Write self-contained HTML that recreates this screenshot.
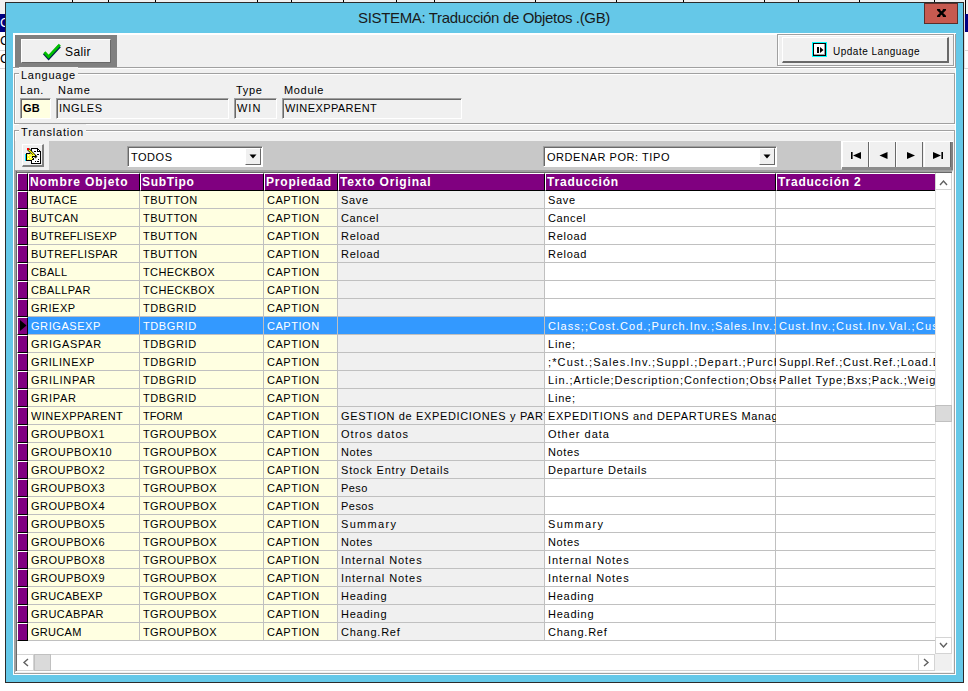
<!DOCTYPE html>
<html><head><meta charset="utf-8"><style>
html,body{margin:0;padding:0}
body{width:968px;height:691px;position:relative;overflow:hidden;background:#fff;font-family:"Liberation Sans",sans-serif}
.t{position:absolute;white-space:pre;line-height:13px;font-family:"Liberation Sans",sans-serif}
</style></head><body>
<div style="position:absolute;left:0px;top:0px;width:968px;height:14px;background:#f0f0f0"></div>
<div style="position:absolute;left:72px;top:0px;width:1px;height:3px;background:#000"></div>
<div style="position:absolute;left:108px;top:0px;width:1px;height:3px;background:#000"></div>
<div style="position:absolute;left:155px;top:0px;width:1px;height:3px;background:#000"></div>
<div style="position:absolute;left:257px;top:0px;width:1px;height:3px;background:#000"></div>
<div style="position:absolute;left:291px;top:0px;width:1px;height:3px;background:#000"></div>
<div style="position:absolute;left:343px;top:0px;width:1px;height:3px;background:#000"></div>
<div style="position:absolute;left:396px;top:0px;width:1px;height:3px;background:#000"></div>
<div style="position:absolute;left:434px;top:0px;width:1px;height:3px;background:#000"></div>
<div style="position:absolute;left:535px;top:0px;width:1px;height:3px;background:#000"></div>
<div style="position:absolute;left:616px;top:0px;width:1px;height:3px;background:#000"></div>
<div style="position:absolute;left:683px;top:0px;width:1px;height:3px;background:#000"></div>
<div style="position:absolute;left:764px;top:0px;width:1px;height:3px;background:#000"></div>
<div style="position:absolute;left:798px;top:0px;width:1px;height:3px;background:#000"></div>
<div style="position:absolute;left:859px;top:0px;width:1px;height:3px;background:#000"></div>
<div style="position:absolute;left:934px;top:0px;width:1px;height:3px;background:#000"></div>
<div style="position:absolute;left:0px;top:14px;width:5px;height:18px;background:#000080"></div>
<div style="position:absolute;left:964px;top:14px;width:4px;height:18px;background:#000080"></div>
<div style="position:absolute;left:0px;top:50px;width:5px;height:1px;background:#d8d8d8"></div>
<div style="position:absolute;left:0px;top:68px;width:5px;height:1px;background:#d8d8d8"></div>
<div style="position:absolute;left:964px;top:50px;width:4px;height:1px;background:#d8d8d8"></div>
<div style="position:absolute;left:964px;top:68px;width:4px;height:1px;background:#d8d8d8"></div>
<div style="position:absolute;left:965px;top:0px;width:1px;height:14px;background:#000"></div>
<div style="position:absolute;left:964px;top:14px;width:1px;height:54px;background:#e0e0e0"></div>
<div class="t" style="left:0px;top:16px;font-size:13px;color:#fff">C</div>
<div class="t" style="left:0px;top:34px;font-size:13px;color:#000">C</div>
<div class="t" style="left:0px;top:52px;font-size:13px;color:#000">C</div>
<div style="position:absolute;left:5px;top:2px;width:957px;height:679px;border:1px solid #2b2b2b;background:#65c8e8"></div>
<div class="t" style="left:358px;top:11px;font-size:15px;letter-spacing:-0.341px;color:#1a1a1a;">SISTEMA: Traducción de Objetos .(GB)</div>
<div style="position:absolute;left:924px;top:3px;width:32px;height:19px;background:#c75a50;border:1px solid #5a2e2a"></div>
<svg style="position:absolute;left:937px;top:9px" width="9" height="8" viewBox="0 0 9 8"><path d="M1.3 0.9 L7.7 7.1 M7.7 0.9 L1.3 7.1" stroke="#000" stroke-width="2.3"/><rect x="0" y="0" width="3.2" height="1.6" fill="#000"/><rect x="5.8" y="0" width="3.2" height="1.6" fill="#000"/><rect x="0" y="6.4" width="3.2" height="1.6" fill="#000"/><rect x="5.8" y="6.4" width="3.2" height="1.6" fill="#000"/></svg>
<div style="position:absolute;left:13px;top:33px;width:943px;height:642px;background:#f0f0f0"></div>
<div style="position:absolute;left:13px;top:33px;width:943px;height:1px;background:#fff"></div>
<div style="position:absolute;left:13px;top:33px;width:1px;height:642px;background:#fff"></div>
<div style="position:absolute;left:955px;top:33px;width:1px;height:642px;background:#fff"></div>
<div style="position:absolute;left:13px;top:674px;width:943px;height:1px;background:#fff"></div>
<div style="position:absolute;left:14px;top:34px;width:941px;height:1px;background:#fff"></div>
<div style="position:absolute;left:14px;top:34px;width:1px;height:33px;background:#fff"></div>
<div style="position:absolute;left:955px;top:34px;width:1px;height:34px;background:#a0a0a0"></div>
<div style="position:absolute;left:15px;top:35px;width:102px;height:32px;background:#808080"></div>
<div style="position:absolute;left:21px;top:39px;width:90px;height:24px;background:#f0f0f0;border-top:1px solid #fff;border-left:1px solid #fff;border-right:1px solid #696969;border-bottom:1px solid #696969;box-sizing:border-box"></div>
<svg style="position:absolute;left:42px;top:42px" width="20" height="19" viewBox="0 0 20 19"><path d="M2.2 11.2 L6.6 16 L17.6 4" fill="none" stroke="#002050" stroke-width="3.4"/><path d="M2.4 10.2 L6.6 14.8 L17.8 2.6" fill="none" stroke="#00c000" stroke-width="2.8"/></svg>
<div class="t" style="left:65px;top:46px;font-size:12px;letter-spacing:0.398px;color:#000;">Salir</div>
<div style="position:absolute;left:13px;top:67px;width:943px;height:1px;background:#a0a0a0"></div>
<div style="position:absolute;left:13px;top:68px;width:943px;height:1px;background:#fff"></div>
<div style="position:absolute;left:778px;top:35px;width:177px;height:32px;border:1px solid #fff;box-sizing:border-box"></div>
<div style="position:absolute;left:777px;top:34px;width:177px;height:32px;border:1px solid #a0a0a0;box-sizing:border-box"></div>
<div style="position:absolute;left:782px;top:37px;width:167px;height:26px;background:#f0f0f0;border-top:1px solid #fff;border-left:1px solid #fff;border-right:2px solid #696969;border-bottom:2px solid #696969;box-sizing:border-box"></div>
<div style="position:absolute;left:812px;top:42px;width:15px;height:15px;background:#00ffff"></div>
<div style="position:absolute;left:813px;top:43px;width:13px;height:13px;background:#000"></div>
<div style="position:absolute;left:814px;top:44px;width:11px;height:11px;background:#fff;box-shadow:inset -1px -1px 0 #a0a0a0"></div>
<div style="position:absolute;left:817px;top:47px;width:2px;height:6px;background:#000"></div>
<svg style="position:absolute;left:820px;top:47px" width="4" height="6" viewBox="0 0 4 6"><path d="M0 0 L3.5 3 L0 6Z" fill="#000"/></svg>
<div class="t" style="left:833px;top:45px;font-size:10px;letter-spacing:0.499px;color:#000;">Update Language</div>
<div style="position:absolute;left:14px;top:73px;width:942px;height:52px;border:1px solid #a0a0a0;box-sizing:border-box"></div><div style="position:absolute;left:15px;top:74px;width:940px;height:50px;border:1px solid #fff;box-sizing:border-box;border-right:none;border-bottom:none"></div><div style="position:absolute;left:955px;top:73px;width:1px;height:52px;background:#fff"></div><div style="position:absolute;left:14px;top:124px;width:942px;height:1px;background:#fff"></div><div style="position:absolute;left:15px;top:123px;width:940px;height:1px;background:#a0a0a0"></div><div style="position:absolute;left:954px;top:74px;width:1px;height:50px;background:#a0a0a0"></div><div style="position:absolute;left:19px;top:67px;width:59px;height:12px;background:#f0f0f0"></div>
<div class="t" style="left:21px;top:69px;font-size:11px;letter-spacing:0.757px;color:#000;">Language</div>
<div class="t" style="left:20px;top:84px;font-size:11px;letter-spacing:0.648px;color:#000;">Lan.</div>
<div class="t" style="left:58px;top:84px;font-size:11px;letter-spacing:0.839px;color:#000;">Name</div>
<div class="t" style="left:236px;top:84px;font-size:11px;letter-spacing:0.713px;color:#000;">Type</div>
<div class="t" style="left:284px;top:84px;font-size:11px;letter-spacing:0.670px;color:#000;">Module</div>
<div style="position:absolute;left:20px;top:98px;width:31px;height:21px;background:#ffffe1;border-top:1px solid #a0a0a0;border-left:1px solid #a0a0a0;border-right:1px solid #fff;border-bottom:1px solid #fff;box-sizing:border-box;box-shadow:inset 1px 1px 0 #696969"></div>
<div class="t" style="left:23px;top:102px;font-size:11px;letter-spacing:0.250px;color:#000;font-weight:bold;">GB</div>
<div style="position:absolute;left:56px;top:98px;width:173px;height:21px;background:#f0f0f0;border-top:1px solid #a0a0a0;border-left:1px solid #a0a0a0;border-right:1px solid #fff;border-bottom:1px solid #fff;box-sizing:border-box;box-shadow:inset 1px 1px 0 #696969"></div>
<div class="t" style="left:59px;top:102px;font-size:11px;letter-spacing:0.542px;color:#000;">INGLES</div>
<div style="position:absolute;left:234px;top:98px;width:43px;height:21px;background:#f0f0f0;border-top:1px solid #a0a0a0;border-left:1px solid #a0a0a0;border-right:1px solid #fff;border-bottom:1px solid #fff;box-sizing:border-box;box-shadow:inset 1px 1px 0 #696969"></div>
<div class="t" style="left:237px;top:102px;font-size:11px;letter-spacing:0.973px;color:#000;">WIN</div>
<div style="position:absolute;left:282px;top:98px;width:180px;height:21px;background:#f0f0f0;border-top:1px solid #a0a0a0;border-left:1px solid #a0a0a0;border-right:1px solid #fff;border-bottom:1px solid #fff;box-sizing:border-box;box-shadow:inset 1px 1px 0 #696969"></div>
<div class="t" style="left:285px;top:102px;font-size:11px;letter-spacing:0.417px;color:#000;">WINEXPPARENT</div>
<div style="position:absolute;left:14px;top:130px;width:942px;height:545px;border:1px solid #a0a0a0;box-sizing:border-box"></div><div style="position:absolute;left:15px;top:131px;width:940px;height:543px;border:1px solid #fff;box-sizing:border-box;border-right:none;border-bottom:none"></div><div style="position:absolute;left:955px;top:130px;width:1px;height:545px;background:#fff"></div><div style="position:absolute;left:14px;top:674px;width:942px;height:1px;background:#fff"></div><div style="position:absolute;left:15px;top:673px;width:940px;height:1px;background:#a0a0a0"></div><div style="position:absolute;left:954px;top:131px;width:1px;height:543px;background:#a0a0a0"></div><div style="position:absolute;left:19px;top:124px;width:67px;height:12px;background:#f0f0f0"></div>
<div class="t" style="left:21px;top:126px;font-size:11px;letter-spacing:0.817px;color:#000;">Translation</div>
<div style="position:absolute;left:15px;top:141px;width:937px;height:29px;background:#c8c8c8"></div>
<div style="position:absolute;left:15px;top:141px;width:34px;height:29px;background:#f0f0f0"></div>
<div style="position:absolute;left:22px;top:144px;width:22px;height:23px;background:#f0f0f0;border-top:1px solid #fff;border-left:1px solid #fff;border-right:2px solid #808080;border-bottom:2px solid #808080;box-sizing:border-box"></div>
<svg style="position:absolute;left:20px;top:142px" width="26" height="26" viewBox="0 0 26 26" shape-rendering="crispEdges">
<path d="M11.5 6.5 H17.5 L20.5 9.5 V21.5 H11.5 Z" fill="#fff" stroke="#000" stroke-width="1"/>
<path d="M17.5 6.5 V9.5 H20.5" fill="none" stroke="#000" stroke-width="1"/>
<rect x="14" y="9" width="2" height="1" fill="#000"/>
<rect x="17" y="12" width="2" height="1" fill="#000"/>
<rect x="18" y="17" width="1" height="1" fill="#000"/>
<rect x="15" y="19" width="1" height="1" fill="#000"/>
<rect x="17" y="19" width="2" height="1" fill="#000"/>
<path d="M8 7 L16.5 15.5" stroke="#000" stroke-width="2.6" shape-rendering="auto"/>
<path d="M8.5 7.5 L16 15" stroke="#ffff00" stroke-width="1.2" shape-rendering="auto"/>
<rect x="7" y="6" width="2" height="2" fill="#ff0000"/>
<path d="M6 11 H10 V12 H12 V13 H16 V15 H13 V16 H14 V18 H12 V19 H6 Z" fill="#000"/>
<rect x="7" y="12" width="5" height="6" fill="#ffff40"/>
<rect x="12" y="13" width="3" height="1" fill="#ffff40"/>
<rect x="12" y="16" width="1" height="1" fill="#ffff40"/>
<rect x="8" y="13" width="1" height="1" fill="#fff"/><rect x="10" y="15" width="1" height="1" fill="#fff"/><rect x="8" y="16" width="1" height="1" fill="#fff"/>
<rect x="5" y="12" width="1" height="7" fill="#00e0ff"/>
</svg>
<div style="position:absolute;left:127px;top:146px;width:136px;height:21px;background:#fff;border-top:1px solid #a0a0a0;border-left:1px solid #a0a0a0;border-right:1px solid #fff;border-bottom:1px solid #fff;box-sizing:border-box;box-shadow:inset 1px 1px 0 #696969"></div><div style="position:absolute;left:245px;top:148px;width:16px;height:17px;background:#f0f0f0;border-top:1px solid #fff;border-left:1px solid #fff;border-right:1px solid #696969;border-bottom:1px solid #696969;box-sizing:border-box"></div><svg style="position:absolute;left:249px;top:154px" width="8" height="5" viewBox="0 0 8 5"><path d="M0.5 0.5 H7.5 L4 4.5Z" fill="#000"/></svg><div class="t" style="left:131px;top:151px;font-size:11px;letter-spacing:0.517px;color:#000;">TODOS</div>
<div style="position:absolute;left:543px;top:146px;width:234px;height:21px;background:#fff;border-top:1px solid #a0a0a0;border-left:1px solid #a0a0a0;border-right:1px solid #fff;border-bottom:1px solid #fff;box-sizing:border-box;box-shadow:inset 1px 1px 0 #696969"></div><div style="position:absolute;left:759px;top:148px;width:16px;height:17px;background:#f0f0f0;border-top:1px solid #fff;border-left:1px solid #fff;border-right:1px solid #696969;border-bottom:1px solid #696969;box-sizing:border-box"></div><svg style="position:absolute;left:763px;top:154px" width="8" height="5" viewBox="0 0 8 5"><path d="M0.5 0.5 H7.5 L4 4.5Z" fill="#000"/></svg><div class="t" style="left:547px;top:151px;font-size:11px;letter-spacing:0.560px;color:#000;">ORDENAR POR: TIPO</div>
<div style="position:absolute;left:841px;top:141px;width:112px;height:28px;background:#f0f0f0"></div>
<div style="position:absolute;left:841px;top:141px;width:112px;height:1px;background:#fff"></div>
<div style="position:absolute;left:841px;top:141px;width:1px;height:27px;background:#fff"></div>
<div style="position:absolute;left:842px;top:167px;width:111px;height:3px;background:#8c8c8c"></div>
<div style="position:absolute;left:951px;top:142px;width:2px;height:28px;background:#808080"></div>
<div style="position:absolute;left:953px;top:141px;width:1px;height:29px;background:#f0f0f0"></div>
<div style="position:absolute;left:842px;top:142px;width:27px;height:25px;background:#f0f0f0;border-left:1px solid #fff;border-right:1px solid #696969;box-sizing:border-box"></div>
<div style="position:absolute;left:869px;top:142px;width:27px;height:25px;background:#f0f0f0;border-left:1px solid #fff;border-right:1px solid #696969;box-sizing:border-box"></div>
<div style="position:absolute;left:896px;top:142px;width:27px;height:25px;background:#f0f0f0;border-left:1px solid #fff;border-right:1px solid #696969;box-sizing:border-box"></div>
<div style="position:absolute;left:924px;top:142px;width:27px;height:25px;background:#f0f0f0;border-left:1px solid #fff;border-right:1px solid #696969;box-sizing:border-box"></div>
<svg style="position:absolute;left:851px;top:152px" width="10" height="7" viewBox="0 0 10 8" preserveAspectRatio="none"><path d="M0 0h1.6v8h-1.6z M10 0 L2 4 L10 8z" fill="#000"/></svg>
<svg style="position:absolute;left:879px;top:152px" width="10" height="7" viewBox="0 0 10 8" preserveAspectRatio="none"><path d="M8.5 0 L0.5 4 L8.5 8z" fill="#000"/></svg>
<svg style="position:absolute;left:907px;top:152px" width="10" height="7" viewBox="0 0 10 8" preserveAspectRatio="none"><path d="M0 0 L8 4 L0 8z" fill="#000"/></svg>
<svg style="position:absolute;left:933px;top:152px" width="10" height="7" viewBox="0 0 10 8" preserveAspectRatio="none"><path d="M0 0 L8 4 L0 8z M8.4 0h1.6v8h-1.6z" fill="#000"/></svg>
<div style="position:absolute;left:15px;top:170px;width:938px;height:502px;background:#fff;border-top:2px solid #a0a0a0;border-left:1px solid #a0a0a0;border-right:1px solid #fff;border-bottom:1px solid #fff;box-sizing:border-box;box-shadow:inset 1px 1px 0 #696969"></div>
<div style="position:absolute;left:17px;top:173px;width:11px;height:18px;background:#800080;border-top:1px solid #fff;border-left:1px solid #fff;border-right:1px solid #000;border-bottom:1px solid #000;box-sizing:border-box"></div>
<div style="position:absolute;left:28px;top:173px;width:112px;height:18px;background:#800080;border-top:1px solid #fff;border-left:1px solid #fff;border-right:1px solid #000;border-bottom:1px solid #000;box-sizing:border-box"></div>
<div class="t" style="left:30px;top:176px;font-size:12px;letter-spacing:0.910px;color:#fff;font-weight:bold;width:109px;overflow:hidden;">Nombre Objeto</div>
<div style="position:absolute;left:140px;top:173px;width:124px;height:18px;background:#800080;border-top:1px solid #fff;border-left:1px solid #fff;border-right:1px solid #000;border-bottom:1px solid #000;box-sizing:border-box"></div>
<div class="t" style="left:142px;top:176px;font-size:12px;letter-spacing:0.675px;color:#fff;font-weight:bold;width:121px;overflow:hidden;">SubTipo</div>
<div style="position:absolute;left:264px;top:173px;width:74px;height:18px;background:#800080;border-top:1px solid #fff;border-left:1px solid #fff;border-right:1px solid #000;border-bottom:1px solid #000;box-sizing:border-box"></div>
<div class="t" style="left:266px;top:176px;font-size:12px;letter-spacing:0.814px;color:#fff;font-weight:bold;width:71px;overflow:hidden;">Propiedad</div>
<div style="position:absolute;left:338px;top:173px;width:207px;height:18px;background:#800080;border-top:1px solid #fff;border-left:1px solid #fff;border-right:1px solid #000;border-bottom:1px solid #000;box-sizing:border-box"></div>
<div class="t" style="left:340px;top:176px;font-size:12px;letter-spacing:0.837px;color:#fff;font-weight:bold;width:204px;overflow:hidden;">Texto Original</div>
<div style="position:absolute;left:545px;top:173px;width:231px;height:18px;background:#800080;border-top:1px solid #fff;border-left:1px solid #fff;border-right:1px solid #000;border-bottom:1px solid #000;box-sizing:border-box"></div>
<div class="t" style="left:547px;top:176px;font-size:12px;letter-spacing:0.798px;color:#fff;font-weight:bold;width:228px;overflow:hidden;">Traducción</div>
<div style="position:absolute;left:776px;top:173px;width:160px;height:18px;background:#800080;border-top:1px solid #fff;border-left:1px solid #fff;border-right:1px solid #000;border-bottom:1px solid #000;box-sizing:border-box"></div>
<div class="t" style="left:778px;top:176px;font-size:12px;letter-spacing:0.790px;color:#fff;font-weight:bold;width:157px;overflow:hidden;">Traducción 2</div>
<div style="position:absolute;left:17px;top:191px;width:11px;height:18px;background:#800080;border-top:1px solid #fff;border-left:1px solid #fff;border-right:1px solid #000;border-bottom:1px solid #000;box-sizing:border-box"></div>
<div style="position:absolute;left:28px;top:191px;width:111px;height:17px;background:#ffffe1"></div>
<div style="position:absolute;left:28px;top:208px;width:112px;height:1px;background:#c0c0c0"></div>
<div style="position:absolute;left:139px;top:191px;width:1px;height:17px;background:#c0c0c0"></div>
<div class="t" style="left:31px;top:194px;font-size:11px;letter-spacing:0.466px;color:#000;width:109px;overflow:hidden;">BUTACE</div>
<div style="position:absolute;left:140px;top:191px;width:123px;height:17px;background:#ffffe1"></div>
<div style="position:absolute;left:140px;top:208px;width:124px;height:1px;background:#c0c0c0"></div>
<div style="position:absolute;left:263px;top:191px;width:1px;height:17px;background:#c0c0c0"></div>
<div class="t" style="left:143px;top:194px;font-size:11px;letter-spacing:0.423px;color:#000;width:121px;overflow:hidden;">TBUTTON</div>
<div style="position:absolute;left:264px;top:191px;width:73px;height:17px;background:#ffffe1"></div>
<div style="position:absolute;left:264px;top:208px;width:74px;height:1px;background:#c0c0c0"></div>
<div style="position:absolute;left:337px;top:191px;width:1px;height:17px;background:#c0c0c0"></div>
<div class="t" style="left:267px;top:194px;font-size:11px;letter-spacing:0.544px;color:#000;width:71px;overflow:hidden;">CAPTION</div>
<div style="position:absolute;left:338px;top:191px;width:206px;height:17px;background:#f0f0f0"></div>
<div style="position:absolute;left:338px;top:208px;width:207px;height:1px;background:#c0c0c0"></div>
<div style="position:absolute;left:544px;top:191px;width:1px;height:17px;background:#c0c0c0"></div>
<div class="t" style="left:341px;top:194px;font-size:11px;letter-spacing:0.657px;color:#000;width:204px;overflow:hidden;">Save</div>
<div style="position:absolute;left:545px;top:191px;width:230px;height:17px;background:#fff"></div>
<div style="position:absolute;left:545px;top:208px;width:231px;height:1px;background:#c0c0c0"></div>
<div style="position:absolute;left:775px;top:191px;width:1px;height:17px;background:#c0c0c0"></div>
<div class="t" style="left:548px;top:194px;font-size:11px;letter-spacing:0.657px;color:#000;width:228px;overflow:hidden;">Save</div>
<div style="position:absolute;left:776px;top:191px;width:159px;height:17px;background:#fff"></div>
<div style="position:absolute;left:776px;top:208px;width:160px;height:1px;background:#c0c0c0"></div>
<div style="position:absolute;left:935px;top:191px;width:1px;height:17px;background:#c0c0c0"></div>
<div style="position:absolute;left:17px;top:209px;width:11px;height:18px;background:#800080;border-top:1px solid #fff;border-left:1px solid #fff;border-right:1px solid #000;border-bottom:1px solid #000;box-sizing:border-box"></div>
<div style="position:absolute;left:28px;top:209px;width:111px;height:17px;background:#ffffe1"></div>
<div style="position:absolute;left:28px;top:226px;width:112px;height:1px;background:#c0c0c0"></div>
<div style="position:absolute;left:139px;top:209px;width:1px;height:17px;background:#c0c0c0"></div>
<div class="t" style="left:31px;top:212px;font-size:11px;letter-spacing:0.396px;color:#000;width:109px;overflow:hidden;">BUTCAN</div>
<div style="position:absolute;left:140px;top:209px;width:123px;height:17px;background:#ffffe1"></div>
<div style="position:absolute;left:140px;top:226px;width:124px;height:1px;background:#c0c0c0"></div>
<div style="position:absolute;left:263px;top:209px;width:1px;height:17px;background:#c0c0c0"></div>
<div class="t" style="left:143px;top:212px;font-size:11px;letter-spacing:0.423px;color:#000;width:121px;overflow:hidden;">TBUTTON</div>
<div style="position:absolute;left:264px;top:209px;width:73px;height:17px;background:#ffffe1"></div>
<div style="position:absolute;left:264px;top:226px;width:74px;height:1px;background:#c0c0c0"></div>
<div style="position:absolute;left:337px;top:209px;width:1px;height:17px;background:#c0c0c0"></div>
<div class="t" style="left:267px;top:212px;font-size:11px;letter-spacing:0.544px;color:#000;width:71px;overflow:hidden;">CAPTION</div>
<div style="position:absolute;left:338px;top:209px;width:206px;height:17px;background:#f0f0f0"></div>
<div style="position:absolute;left:338px;top:226px;width:207px;height:1px;background:#c0c0c0"></div>
<div style="position:absolute;left:544px;top:209px;width:1px;height:17px;background:#c0c0c0"></div>
<div class="t" style="left:341px;top:212px;font-size:11px;letter-spacing:0.643px;color:#000;width:204px;overflow:hidden;">Cancel</div>
<div style="position:absolute;left:545px;top:209px;width:230px;height:17px;background:#fff"></div>
<div style="position:absolute;left:545px;top:226px;width:231px;height:1px;background:#c0c0c0"></div>
<div style="position:absolute;left:775px;top:209px;width:1px;height:17px;background:#c0c0c0"></div>
<div class="t" style="left:548px;top:212px;font-size:11px;letter-spacing:0.643px;color:#000;width:228px;overflow:hidden;">Cancel</div>
<div style="position:absolute;left:776px;top:209px;width:159px;height:17px;background:#fff"></div>
<div style="position:absolute;left:776px;top:226px;width:160px;height:1px;background:#c0c0c0"></div>
<div style="position:absolute;left:935px;top:209px;width:1px;height:17px;background:#c0c0c0"></div>
<div style="position:absolute;left:17px;top:227px;width:11px;height:18px;background:#800080;border-top:1px solid #fff;border-left:1px solid #fff;border-right:1px solid #000;border-bottom:1px solid #000;box-sizing:border-box"></div>
<div style="position:absolute;left:28px;top:227px;width:111px;height:17px;background:#ffffe1"></div>
<div style="position:absolute;left:28px;top:244px;width:112px;height:1px;background:#c0c0c0"></div>
<div style="position:absolute;left:139px;top:227px;width:1px;height:17px;background:#c0c0c0"></div>
<div class="t" style="left:31px;top:230px;font-size:11px;letter-spacing:0.306px;color:#000;width:109px;overflow:hidden;">BUTREFLISEXP</div>
<div style="position:absolute;left:140px;top:227px;width:123px;height:17px;background:#ffffe1"></div>
<div style="position:absolute;left:140px;top:244px;width:124px;height:1px;background:#c0c0c0"></div>
<div style="position:absolute;left:263px;top:227px;width:1px;height:17px;background:#c0c0c0"></div>
<div class="t" style="left:143px;top:230px;font-size:11px;letter-spacing:0.423px;color:#000;width:121px;overflow:hidden;">TBUTTON</div>
<div style="position:absolute;left:264px;top:227px;width:73px;height:17px;background:#ffffe1"></div>
<div style="position:absolute;left:264px;top:244px;width:74px;height:1px;background:#c0c0c0"></div>
<div style="position:absolute;left:337px;top:227px;width:1px;height:17px;background:#c0c0c0"></div>
<div class="t" style="left:267px;top:230px;font-size:11px;letter-spacing:0.544px;color:#000;width:71px;overflow:hidden;">CAPTION</div>
<div style="position:absolute;left:338px;top:227px;width:206px;height:17px;background:#f0f0f0"></div>
<div style="position:absolute;left:338px;top:244px;width:207px;height:1px;background:#c0c0c0"></div>
<div style="position:absolute;left:544px;top:227px;width:1px;height:17px;background:#c0c0c0"></div>
<div class="t" style="left:341px;top:230px;font-size:11px;letter-spacing:0.707px;color:#000;width:204px;overflow:hidden;">Reload</div>
<div style="position:absolute;left:545px;top:227px;width:230px;height:17px;background:#fff"></div>
<div style="position:absolute;left:545px;top:244px;width:231px;height:1px;background:#c0c0c0"></div>
<div style="position:absolute;left:775px;top:227px;width:1px;height:17px;background:#c0c0c0"></div>
<div class="t" style="left:548px;top:230px;font-size:11px;letter-spacing:0.707px;color:#000;width:228px;overflow:hidden;">Reload</div>
<div style="position:absolute;left:776px;top:227px;width:159px;height:17px;background:#fff"></div>
<div style="position:absolute;left:776px;top:244px;width:160px;height:1px;background:#c0c0c0"></div>
<div style="position:absolute;left:935px;top:227px;width:1px;height:17px;background:#c0c0c0"></div>
<div style="position:absolute;left:17px;top:245px;width:11px;height:18px;background:#800080;border-top:1px solid #fff;border-left:1px solid #fff;border-right:1px solid #000;border-bottom:1px solid #000;box-sizing:border-box"></div>
<div style="position:absolute;left:28px;top:245px;width:111px;height:17px;background:#ffffe1"></div>
<div style="position:absolute;left:28px;top:262px;width:112px;height:1px;background:#c0c0c0"></div>
<div style="position:absolute;left:139px;top:245px;width:1px;height:17px;background:#c0c0c0"></div>
<div class="t" style="left:31px;top:248px;font-size:11px;letter-spacing:0.407px;color:#000;width:109px;overflow:hidden;">BUTREFLISPAR</div>
<div style="position:absolute;left:140px;top:245px;width:123px;height:17px;background:#ffffe1"></div>
<div style="position:absolute;left:140px;top:262px;width:124px;height:1px;background:#c0c0c0"></div>
<div style="position:absolute;left:263px;top:245px;width:1px;height:17px;background:#c0c0c0"></div>
<div class="t" style="left:143px;top:248px;font-size:11px;letter-spacing:0.423px;color:#000;width:121px;overflow:hidden;">TBUTTON</div>
<div style="position:absolute;left:264px;top:245px;width:73px;height:17px;background:#ffffe1"></div>
<div style="position:absolute;left:264px;top:262px;width:74px;height:1px;background:#c0c0c0"></div>
<div style="position:absolute;left:337px;top:245px;width:1px;height:17px;background:#c0c0c0"></div>
<div class="t" style="left:267px;top:248px;font-size:11px;letter-spacing:0.544px;color:#000;width:71px;overflow:hidden;">CAPTION</div>
<div style="position:absolute;left:338px;top:245px;width:206px;height:17px;background:#f0f0f0"></div>
<div style="position:absolute;left:338px;top:262px;width:207px;height:1px;background:#c0c0c0"></div>
<div style="position:absolute;left:544px;top:245px;width:1px;height:17px;background:#c0c0c0"></div>
<div class="t" style="left:341px;top:248px;font-size:11px;letter-spacing:0.707px;color:#000;width:204px;overflow:hidden;">Reload</div>
<div style="position:absolute;left:545px;top:245px;width:230px;height:17px;background:#fff"></div>
<div style="position:absolute;left:545px;top:262px;width:231px;height:1px;background:#c0c0c0"></div>
<div style="position:absolute;left:775px;top:245px;width:1px;height:17px;background:#c0c0c0"></div>
<div class="t" style="left:548px;top:248px;font-size:11px;letter-spacing:0.707px;color:#000;width:228px;overflow:hidden;">Reload</div>
<div style="position:absolute;left:776px;top:245px;width:159px;height:17px;background:#fff"></div>
<div style="position:absolute;left:776px;top:262px;width:160px;height:1px;background:#c0c0c0"></div>
<div style="position:absolute;left:935px;top:245px;width:1px;height:17px;background:#c0c0c0"></div>
<div style="position:absolute;left:17px;top:263px;width:11px;height:18px;background:#800080;border-top:1px solid #fff;border-left:1px solid #fff;border-right:1px solid #000;border-bottom:1px solid #000;box-sizing:border-box"></div>
<div style="position:absolute;left:28px;top:263px;width:111px;height:17px;background:#ffffe1"></div>
<div style="position:absolute;left:28px;top:280px;width:112px;height:1px;background:#c0c0c0"></div>
<div style="position:absolute;left:139px;top:263px;width:1px;height:17px;background:#c0c0c0"></div>
<div class="t" style="left:31px;top:266px;font-size:11px;letter-spacing:0.329px;color:#000;width:109px;overflow:hidden;">CBALL</div>
<div style="position:absolute;left:140px;top:263px;width:123px;height:17px;background:#ffffe1"></div>
<div style="position:absolute;left:140px;top:280px;width:124px;height:1px;background:#c0c0c0"></div>
<div style="position:absolute;left:263px;top:263px;width:1px;height:17px;background:#c0c0c0"></div>
<div class="t" style="left:143px;top:266px;font-size:11px;letter-spacing:0.383px;color:#000;width:121px;overflow:hidden;">TCHECKBOX</div>
<div style="position:absolute;left:264px;top:263px;width:73px;height:17px;background:#ffffe1"></div>
<div style="position:absolute;left:264px;top:280px;width:74px;height:1px;background:#c0c0c0"></div>
<div style="position:absolute;left:337px;top:263px;width:1px;height:17px;background:#c0c0c0"></div>
<div class="t" style="left:267px;top:266px;font-size:11px;letter-spacing:0.544px;color:#000;width:71px;overflow:hidden;">CAPTION</div>
<div style="position:absolute;left:338px;top:263px;width:206px;height:17px;background:#f0f0f0"></div>
<div style="position:absolute;left:338px;top:280px;width:207px;height:1px;background:#c0c0c0"></div>
<div style="position:absolute;left:544px;top:263px;width:1px;height:17px;background:#c0c0c0"></div>
<div style="position:absolute;left:545px;top:263px;width:230px;height:17px;background:#fff"></div>
<div style="position:absolute;left:545px;top:280px;width:231px;height:1px;background:#c0c0c0"></div>
<div style="position:absolute;left:775px;top:263px;width:1px;height:17px;background:#c0c0c0"></div>
<div style="position:absolute;left:776px;top:263px;width:159px;height:17px;background:#fff"></div>
<div style="position:absolute;left:776px;top:280px;width:160px;height:1px;background:#c0c0c0"></div>
<div style="position:absolute;left:935px;top:263px;width:1px;height:17px;background:#c0c0c0"></div>
<div style="position:absolute;left:17px;top:281px;width:11px;height:18px;background:#800080;border-top:1px solid #fff;border-left:1px solid #fff;border-right:1px solid #000;border-bottom:1px solid #000;box-sizing:border-box"></div>
<div style="position:absolute;left:28px;top:281px;width:111px;height:17px;background:#ffffe1"></div>
<div style="position:absolute;left:28px;top:298px;width:112px;height:1px;background:#c0c0c0"></div>
<div style="position:absolute;left:139px;top:281px;width:1px;height:17px;background:#c0c0c0"></div>
<div class="t" style="left:31px;top:284px;font-size:11px;letter-spacing:0.393px;color:#000;width:109px;overflow:hidden;">CBALLPAR</div>
<div style="position:absolute;left:140px;top:281px;width:123px;height:17px;background:#ffffe1"></div>
<div style="position:absolute;left:140px;top:298px;width:124px;height:1px;background:#c0c0c0"></div>
<div style="position:absolute;left:263px;top:281px;width:1px;height:17px;background:#c0c0c0"></div>
<div class="t" style="left:143px;top:284px;font-size:11px;letter-spacing:0.383px;color:#000;width:121px;overflow:hidden;">TCHECKBOX</div>
<div style="position:absolute;left:264px;top:281px;width:73px;height:17px;background:#ffffe1"></div>
<div style="position:absolute;left:264px;top:298px;width:74px;height:1px;background:#c0c0c0"></div>
<div style="position:absolute;left:337px;top:281px;width:1px;height:17px;background:#c0c0c0"></div>
<div class="t" style="left:267px;top:284px;font-size:11px;letter-spacing:0.544px;color:#000;width:71px;overflow:hidden;">CAPTION</div>
<div style="position:absolute;left:338px;top:281px;width:206px;height:17px;background:#f0f0f0"></div>
<div style="position:absolute;left:338px;top:298px;width:207px;height:1px;background:#c0c0c0"></div>
<div style="position:absolute;left:544px;top:281px;width:1px;height:17px;background:#c0c0c0"></div>
<div style="position:absolute;left:545px;top:281px;width:230px;height:17px;background:#fff"></div>
<div style="position:absolute;left:545px;top:298px;width:231px;height:1px;background:#c0c0c0"></div>
<div style="position:absolute;left:775px;top:281px;width:1px;height:17px;background:#c0c0c0"></div>
<div style="position:absolute;left:776px;top:281px;width:159px;height:17px;background:#fff"></div>
<div style="position:absolute;left:776px;top:298px;width:160px;height:1px;background:#c0c0c0"></div>
<div style="position:absolute;left:935px;top:281px;width:1px;height:17px;background:#c0c0c0"></div>
<div style="position:absolute;left:17px;top:299px;width:11px;height:18px;background:#800080;border-top:1px solid #fff;border-left:1px solid #fff;border-right:1px solid #000;border-bottom:1px solid #000;box-sizing:border-box"></div>
<div style="position:absolute;left:28px;top:299px;width:111px;height:17px;background:#ffffe1"></div>
<div style="position:absolute;left:28px;top:316px;width:112px;height:1px;background:#c0c0c0"></div>
<div style="position:absolute;left:139px;top:299px;width:1px;height:17px;background:#c0c0c0"></div>
<div class="t" style="left:31px;top:302px;font-size:11px;letter-spacing:0.505px;color:#000;width:109px;overflow:hidden;">GRIEXP</div>
<div style="position:absolute;left:140px;top:299px;width:123px;height:17px;background:#ffffe1"></div>
<div style="position:absolute;left:140px;top:316px;width:124px;height:1px;background:#c0c0c0"></div>
<div style="position:absolute;left:263px;top:299px;width:1px;height:17px;background:#c0c0c0"></div>
<div class="t" style="left:143px;top:302px;font-size:11px;letter-spacing:0.600px;color:#000;width:121px;overflow:hidden;">TDBGRID</div>
<div style="position:absolute;left:264px;top:299px;width:73px;height:17px;background:#ffffe1"></div>
<div style="position:absolute;left:264px;top:316px;width:74px;height:1px;background:#c0c0c0"></div>
<div style="position:absolute;left:337px;top:299px;width:1px;height:17px;background:#c0c0c0"></div>
<div class="t" style="left:267px;top:302px;font-size:11px;letter-spacing:0.544px;color:#000;width:71px;overflow:hidden;">CAPTION</div>
<div style="position:absolute;left:338px;top:299px;width:206px;height:17px;background:#f0f0f0"></div>
<div style="position:absolute;left:338px;top:316px;width:207px;height:1px;background:#c0c0c0"></div>
<div style="position:absolute;left:544px;top:299px;width:1px;height:17px;background:#c0c0c0"></div>
<div style="position:absolute;left:545px;top:299px;width:230px;height:17px;background:#fff"></div>
<div style="position:absolute;left:545px;top:316px;width:231px;height:1px;background:#c0c0c0"></div>
<div style="position:absolute;left:775px;top:299px;width:1px;height:17px;background:#c0c0c0"></div>
<div style="position:absolute;left:776px;top:299px;width:159px;height:17px;background:#fff"></div>
<div style="position:absolute;left:776px;top:316px;width:160px;height:1px;background:#c0c0c0"></div>
<div style="position:absolute;left:935px;top:299px;width:1px;height:17px;background:#c0c0c0"></div>
<div style="position:absolute;left:17px;top:317px;width:11px;height:18px;background:#800080;border-top:1px solid #fff;border-left:1px solid #fff;border-right:1px solid #000;border-bottom:1px solid #000;box-sizing:border-box"></div>
<svg style="position:absolute;left:20px;top:320px" width="7" height="11" viewBox="0 0 7 11"><path d="M0 0 L6.5 5.5 L0 11z" fill="#000"/></svg>
<div style="position:absolute;left:28px;top:317px;width:111px;height:17px;background:#3399ff"></div>
<div style="position:absolute;left:28px;top:334px;width:112px;height:1px;background:#c0c0c0"></div>
<div style="position:absolute;left:139px;top:317px;width:1px;height:17px;background:#c0c0c0"></div>
<div class="t" style="left:31px;top:320px;font-size:11px;letter-spacing:0.567px;color:#fff;width:109px;overflow:hidden;">GRIGASEXP</div>
<div style="position:absolute;left:140px;top:317px;width:123px;height:17px;background:#3399ff"></div>
<div style="position:absolute;left:140px;top:334px;width:124px;height:1px;background:#c0c0c0"></div>
<div style="position:absolute;left:263px;top:317px;width:1px;height:17px;background:#c0c0c0"></div>
<div class="t" style="left:143px;top:320px;font-size:11px;letter-spacing:0.600px;color:#fff;width:121px;overflow:hidden;">TDBGRID</div>
<div style="position:absolute;left:264px;top:317px;width:73px;height:17px;background:#3399ff"></div>
<div style="position:absolute;left:264px;top:334px;width:74px;height:1px;background:#c0c0c0"></div>
<div style="position:absolute;left:337px;top:317px;width:1px;height:17px;background:#c0c0c0"></div>
<div class="t" style="left:267px;top:320px;font-size:11px;letter-spacing:0.544px;color:#fff;width:71px;overflow:hidden;">CAPTION</div>
<div style="position:absolute;left:338px;top:317px;width:206px;height:17px;background:#3399ff"></div>
<div style="position:absolute;left:338px;top:334px;width:207px;height:1px;background:#c0c0c0"></div>
<div style="position:absolute;left:544px;top:317px;width:1px;height:17px;background:#c0c0c0"></div>
<div style="position:absolute;left:545px;top:317px;width:230px;height:17px;background:#3399ff"></div>
<div style="position:absolute;left:545px;top:334px;width:231px;height:1px;background:#c0c0c0"></div>
<div style="position:absolute;left:775px;top:317px;width:1px;height:17px;background:#c0c0c0"></div>
<div class="t" style="left:548px;top:320px;font-size:11px;letter-spacing:1.059px;color:#fff;width:228px;overflow:hidden;">Class;;Cost.Cod.;Purch.Inv.;Sales.Inv.;Sales</div>
<div style="position:absolute;left:776px;top:317px;width:159px;height:17px;background:#3399ff"></div>
<div style="position:absolute;left:776px;top:334px;width:160px;height:1px;background:#c0c0c0"></div>
<div style="position:absolute;left:935px;top:317px;width:1px;height:17px;background:#c0c0c0"></div>
<div class="t" style="left:779px;top:320px;font-size:11px;letter-spacing:1.141px;color:#fff;width:157px;overflow:hidden;">Cust.Inv.;Cust.Inv.Val.;Cust</div>
<div style="position:absolute;left:17px;top:335px;width:11px;height:18px;background:#800080;border-top:1px solid #fff;border-left:1px solid #fff;border-right:1px solid #000;border-bottom:1px solid #000;box-sizing:border-box"></div>
<div style="position:absolute;left:28px;top:335px;width:111px;height:17px;background:#ffffe1"></div>
<div style="position:absolute;left:28px;top:352px;width:112px;height:1px;background:#c0c0c0"></div>
<div style="position:absolute;left:139px;top:335px;width:1px;height:17px;background:#c0c0c0"></div>
<div class="t" style="left:31px;top:338px;font-size:11px;letter-spacing:0.701px;color:#000;width:109px;overflow:hidden;">GRIGASPAR</div>
<div style="position:absolute;left:140px;top:335px;width:123px;height:17px;background:#ffffe1"></div>
<div style="position:absolute;left:140px;top:352px;width:124px;height:1px;background:#c0c0c0"></div>
<div style="position:absolute;left:263px;top:335px;width:1px;height:17px;background:#c0c0c0"></div>
<div class="t" style="left:143px;top:338px;font-size:11px;letter-spacing:0.600px;color:#000;width:121px;overflow:hidden;">TDBGRID</div>
<div style="position:absolute;left:264px;top:335px;width:73px;height:17px;background:#ffffe1"></div>
<div style="position:absolute;left:264px;top:352px;width:74px;height:1px;background:#c0c0c0"></div>
<div style="position:absolute;left:337px;top:335px;width:1px;height:17px;background:#c0c0c0"></div>
<div class="t" style="left:267px;top:338px;font-size:11px;letter-spacing:0.544px;color:#000;width:71px;overflow:hidden;">CAPTION</div>
<div style="position:absolute;left:338px;top:335px;width:206px;height:17px;background:#f0f0f0"></div>
<div style="position:absolute;left:338px;top:352px;width:207px;height:1px;background:#c0c0c0"></div>
<div style="position:absolute;left:544px;top:335px;width:1px;height:17px;background:#c0c0c0"></div>
<div style="position:absolute;left:545px;top:335px;width:230px;height:17px;background:#fff"></div>
<div style="position:absolute;left:545px;top:352px;width:231px;height:1px;background:#c0c0c0"></div>
<div style="position:absolute;left:775px;top:335px;width:1px;height:17px;background:#c0c0c0"></div>
<div class="t" style="left:548px;top:338px;font-size:11px;letter-spacing:0.809px;color:#000;width:228px;overflow:hidden;">Line;</div>
<div style="position:absolute;left:776px;top:335px;width:159px;height:17px;background:#fff"></div>
<div style="position:absolute;left:776px;top:352px;width:160px;height:1px;background:#c0c0c0"></div>
<div style="position:absolute;left:935px;top:335px;width:1px;height:17px;background:#c0c0c0"></div>
<div style="position:absolute;left:17px;top:353px;width:11px;height:18px;background:#800080;border-top:1px solid #fff;border-left:1px solid #fff;border-right:1px solid #000;border-bottom:1px solid #000;box-sizing:border-box"></div>
<div style="position:absolute;left:28px;top:353px;width:111px;height:17px;background:#ffffe1"></div>
<div style="position:absolute;left:28px;top:370px;width:112px;height:1px;background:#c0c0c0"></div>
<div style="position:absolute;left:139px;top:353px;width:1px;height:17px;background:#c0c0c0"></div>
<div class="t" style="left:31px;top:356px;font-size:11px;letter-spacing:0.579px;color:#000;width:109px;overflow:hidden;">GRILINEXP</div>
<div style="position:absolute;left:140px;top:353px;width:123px;height:17px;background:#ffffe1"></div>
<div style="position:absolute;left:140px;top:370px;width:124px;height:1px;background:#c0c0c0"></div>
<div style="position:absolute;left:263px;top:353px;width:1px;height:17px;background:#c0c0c0"></div>
<div class="t" style="left:143px;top:356px;font-size:11px;letter-spacing:0.600px;color:#000;width:121px;overflow:hidden;">TDBGRID</div>
<div style="position:absolute;left:264px;top:353px;width:73px;height:17px;background:#ffffe1"></div>
<div style="position:absolute;left:264px;top:370px;width:74px;height:1px;background:#c0c0c0"></div>
<div style="position:absolute;left:337px;top:353px;width:1px;height:17px;background:#c0c0c0"></div>
<div class="t" style="left:267px;top:356px;font-size:11px;letter-spacing:0.544px;color:#000;width:71px;overflow:hidden;">CAPTION</div>
<div style="position:absolute;left:338px;top:353px;width:206px;height:17px;background:#f0f0f0"></div>
<div style="position:absolute;left:338px;top:370px;width:207px;height:1px;background:#c0c0c0"></div>
<div style="position:absolute;left:544px;top:353px;width:1px;height:17px;background:#c0c0c0"></div>
<div style="position:absolute;left:545px;top:353px;width:230px;height:17px;background:#fff"></div>
<div style="position:absolute;left:545px;top:370px;width:231px;height:1px;background:#c0c0c0"></div>
<div style="position:absolute;left:775px;top:353px;width:1px;height:17px;background:#c0c0c0"></div>
<div class="t" style="left:548px;top:356px;font-size:11px;letter-spacing:1.141px;color:#000;width:228px;overflow:hidden;">;*Cust.;Sales.Inv.;Suppl.;Depart.;Purch.</div>
<div style="position:absolute;left:776px;top:353px;width:159px;height:17px;background:#fff"></div>
<div style="position:absolute;left:776px;top:370px;width:160px;height:1px;background:#c0c0c0"></div>
<div style="position:absolute;left:935px;top:353px;width:1px;height:17px;background:#c0c0c0"></div>
<div class="t" style="left:779px;top:356px;font-size:11px;letter-spacing:0.877px;color:#000;width:157px;overflow:hidden;">Suppl.Ref.;Cust.Ref.;Load.Date</div>
<div style="position:absolute;left:17px;top:371px;width:11px;height:18px;background:#800080;border-top:1px solid #fff;border-left:1px solid #fff;border-right:1px solid #000;border-bottom:1px solid #000;box-sizing:border-box"></div>
<div style="position:absolute;left:28px;top:371px;width:111px;height:17px;background:#ffffe1"></div>
<div style="position:absolute;left:28px;top:388px;width:112px;height:1px;background:#c0c0c0"></div>
<div style="position:absolute;left:139px;top:371px;width:1px;height:17px;background:#c0c0c0"></div>
<div class="t" style="left:31px;top:374px;font-size:11px;letter-spacing:0.714px;color:#000;width:109px;overflow:hidden;">GRILINPAR</div>
<div style="position:absolute;left:140px;top:371px;width:123px;height:17px;background:#ffffe1"></div>
<div style="position:absolute;left:140px;top:388px;width:124px;height:1px;background:#c0c0c0"></div>
<div style="position:absolute;left:263px;top:371px;width:1px;height:17px;background:#c0c0c0"></div>
<div class="t" style="left:143px;top:374px;font-size:11px;letter-spacing:0.600px;color:#000;width:121px;overflow:hidden;">TDBGRID</div>
<div style="position:absolute;left:264px;top:371px;width:73px;height:17px;background:#ffffe1"></div>
<div style="position:absolute;left:264px;top:388px;width:74px;height:1px;background:#c0c0c0"></div>
<div style="position:absolute;left:337px;top:371px;width:1px;height:17px;background:#c0c0c0"></div>
<div class="t" style="left:267px;top:374px;font-size:11px;letter-spacing:0.544px;color:#000;width:71px;overflow:hidden;">CAPTION</div>
<div style="position:absolute;left:338px;top:371px;width:206px;height:17px;background:#f0f0f0"></div>
<div style="position:absolute;left:338px;top:388px;width:207px;height:1px;background:#c0c0c0"></div>
<div style="position:absolute;left:544px;top:371px;width:1px;height:17px;background:#c0c0c0"></div>
<div style="position:absolute;left:545px;top:371px;width:230px;height:17px;background:#fff"></div>
<div style="position:absolute;left:545px;top:388px;width:231px;height:1px;background:#c0c0c0"></div>
<div style="position:absolute;left:775px;top:371px;width:1px;height:17px;background:#c0c0c0"></div>
<div class="t" style="left:548px;top:374px;font-size:11px;letter-spacing:0.936px;color:#000;width:228px;overflow:hidden;">Lin.;Article;Description;Confection;Observ</div>
<div style="position:absolute;left:776px;top:371px;width:159px;height:17px;background:#fff"></div>
<div style="position:absolute;left:776px;top:388px;width:160px;height:1px;background:#c0c0c0"></div>
<div style="position:absolute;left:935px;top:371px;width:1px;height:17px;background:#c0c0c0"></div>
<div class="t" style="left:779px;top:374px;font-size:11px;letter-spacing:0.887px;color:#000;width:157px;overflow:hidden;">Pallet Type;Bxs;Pack.;Weight</div>
<div style="position:absolute;left:17px;top:389px;width:11px;height:18px;background:#800080;border-top:1px solid #fff;border-left:1px solid #fff;border-right:1px solid #000;border-bottom:1px solid #000;box-sizing:border-box"></div>
<div style="position:absolute;left:28px;top:389px;width:111px;height:17px;background:#ffffe1"></div>
<div style="position:absolute;left:28px;top:406px;width:112px;height:1px;background:#c0c0c0"></div>
<div style="position:absolute;left:139px;top:389px;width:1px;height:17px;background:#c0c0c0"></div>
<div class="t" style="left:31px;top:392px;font-size:11px;letter-spacing:0.707px;color:#000;width:109px;overflow:hidden;">GRIPAR</div>
<div style="position:absolute;left:140px;top:389px;width:123px;height:17px;background:#ffffe1"></div>
<div style="position:absolute;left:140px;top:406px;width:124px;height:1px;background:#c0c0c0"></div>
<div style="position:absolute;left:263px;top:389px;width:1px;height:17px;background:#c0c0c0"></div>
<div class="t" style="left:143px;top:392px;font-size:11px;letter-spacing:0.600px;color:#000;width:121px;overflow:hidden;">TDBGRID</div>
<div style="position:absolute;left:264px;top:389px;width:73px;height:17px;background:#ffffe1"></div>
<div style="position:absolute;left:264px;top:406px;width:74px;height:1px;background:#c0c0c0"></div>
<div style="position:absolute;left:337px;top:389px;width:1px;height:17px;background:#c0c0c0"></div>
<div class="t" style="left:267px;top:392px;font-size:11px;letter-spacing:0.544px;color:#000;width:71px;overflow:hidden;">CAPTION</div>
<div style="position:absolute;left:338px;top:389px;width:206px;height:17px;background:#f0f0f0"></div>
<div style="position:absolute;left:338px;top:406px;width:207px;height:1px;background:#c0c0c0"></div>
<div style="position:absolute;left:544px;top:389px;width:1px;height:17px;background:#c0c0c0"></div>
<div style="position:absolute;left:545px;top:389px;width:230px;height:17px;background:#fff"></div>
<div style="position:absolute;left:545px;top:406px;width:231px;height:1px;background:#c0c0c0"></div>
<div style="position:absolute;left:775px;top:389px;width:1px;height:17px;background:#c0c0c0"></div>
<div class="t" style="left:548px;top:392px;font-size:11px;letter-spacing:0.809px;color:#000;width:228px;overflow:hidden;">Line;</div>
<div style="position:absolute;left:776px;top:389px;width:159px;height:17px;background:#fff"></div>
<div style="position:absolute;left:776px;top:406px;width:160px;height:1px;background:#c0c0c0"></div>
<div style="position:absolute;left:935px;top:389px;width:1px;height:17px;background:#c0c0c0"></div>
<div style="position:absolute;left:17px;top:407px;width:11px;height:18px;background:#800080;border-top:1px solid #fff;border-left:1px solid #fff;border-right:1px solid #000;border-bottom:1px solid #000;box-sizing:border-box"></div>
<div style="position:absolute;left:28px;top:407px;width:111px;height:17px;background:#ffffe1"></div>
<div style="position:absolute;left:28px;top:424px;width:112px;height:1px;background:#c0c0c0"></div>
<div style="position:absolute;left:139px;top:407px;width:1px;height:17px;background:#c0c0c0"></div>
<div class="t" style="left:31px;top:410px;font-size:11px;letter-spacing:0.417px;color:#000;width:109px;overflow:hidden;">WINEXPPARENT</div>
<div style="position:absolute;left:140px;top:407px;width:123px;height:17px;background:#ffffe1"></div>
<div style="position:absolute;left:140px;top:424px;width:124px;height:1px;background:#c0c0c0"></div>
<div style="position:absolute;left:263px;top:407px;width:1px;height:17px;background:#c0c0c0"></div>
<div class="t" style="left:143px;top:410px;font-size:11px;letter-spacing:0.080px;color:#000;width:121px;overflow:hidden;">TFORM</div>
<div style="position:absolute;left:264px;top:407px;width:73px;height:17px;background:#ffffe1"></div>
<div style="position:absolute;left:264px;top:424px;width:74px;height:1px;background:#c0c0c0"></div>
<div style="position:absolute;left:337px;top:407px;width:1px;height:17px;background:#c0c0c0"></div>
<div class="t" style="left:267px;top:410px;font-size:11px;letter-spacing:0.544px;color:#000;width:71px;overflow:hidden;">CAPTION</div>
<div style="position:absolute;left:338px;top:407px;width:206px;height:17px;background:#f0f0f0"></div>
<div style="position:absolute;left:338px;top:424px;width:207px;height:1px;background:#c0c0c0"></div>
<div style="position:absolute;left:544px;top:407px;width:1px;height:17px;background:#c0c0c0"></div>
<div class="t" style="left:341px;top:410px;font-size:11px;letter-spacing:0.650px;color:#000;width:204px;overflow:hidden;">GESTION de EXPEDICIONES y PARTIDAS</div>
<div style="position:absolute;left:545px;top:407px;width:230px;height:17px;background:#fff"></div>
<div style="position:absolute;left:545px;top:424px;width:231px;height:1px;background:#c0c0c0"></div>
<div style="position:absolute;left:775px;top:407px;width:1px;height:17px;background:#c0c0c0"></div>
<div class="t" style="left:548px;top:410px;font-size:11px;letter-spacing:0.658px;color:#000;width:228px;overflow:hidden;">EXPEDITIONS and DEPARTURES Management</div>
<div style="position:absolute;left:776px;top:407px;width:159px;height:17px;background:#fff"></div>
<div style="position:absolute;left:776px;top:424px;width:160px;height:1px;background:#c0c0c0"></div>
<div style="position:absolute;left:935px;top:407px;width:1px;height:17px;background:#c0c0c0"></div>
<div style="position:absolute;left:17px;top:425px;width:11px;height:18px;background:#800080;border-top:1px solid #fff;border-left:1px solid #fff;border-right:1px solid #000;border-bottom:1px solid #000;box-sizing:border-box"></div>
<div style="position:absolute;left:28px;top:425px;width:111px;height:17px;background:#ffffe1"></div>
<div style="position:absolute;left:28px;top:442px;width:112px;height:1px;background:#c0c0c0"></div>
<div style="position:absolute;left:139px;top:425px;width:1px;height:17px;background:#c0c0c0"></div>
<div class="t" style="left:31px;top:428px;font-size:11px;letter-spacing:0.479px;color:#000;width:109px;overflow:hidden;">GROUPBOX1</div>
<div style="position:absolute;left:140px;top:425px;width:123px;height:17px;background:#ffffe1"></div>
<div style="position:absolute;left:140px;top:442px;width:124px;height:1px;background:#c0c0c0"></div>
<div style="position:absolute;left:263px;top:425px;width:1px;height:17px;background:#c0c0c0"></div>
<div class="t" style="left:143px;top:428px;font-size:11px;letter-spacing:0.401px;color:#000;width:121px;overflow:hidden;">TGROUPBOX</div>
<div style="position:absolute;left:264px;top:425px;width:73px;height:17px;background:#ffffe1"></div>
<div style="position:absolute;left:264px;top:442px;width:74px;height:1px;background:#c0c0c0"></div>
<div style="position:absolute;left:337px;top:425px;width:1px;height:17px;background:#c0c0c0"></div>
<div class="t" style="left:267px;top:428px;font-size:11px;letter-spacing:0.544px;color:#000;width:71px;overflow:hidden;">CAPTION</div>
<div style="position:absolute;left:338px;top:425px;width:206px;height:17px;background:#f0f0f0"></div>
<div style="position:absolute;left:338px;top:442px;width:207px;height:1px;background:#c0c0c0"></div>
<div style="position:absolute;left:544px;top:425px;width:1px;height:17px;background:#c0c0c0"></div>
<div class="t" style="left:341px;top:428px;font-size:11px;letter-spacing:1.022px;color:#000;width:204px;overflow:hidden;">Otros datos</div>
<div style="position:absolute;left:545px;top:425px;width:230px;height:17px;background:#fff"></div>
<div style="position:absolute;left:545px;top:442px;width:231px;height:1px;background:#c0c0c0"></div>
<div style="position:absolute;left:775px;top:425px;width:1px;height:17px;background:#c0c0c0"></div>
<div class="t" style="left:548px;top:428px;font-size:11px;letter-spacing:0.992px;color:#000;width:228px;overflow:hidden;">Other data</div>
<div style="position:absolute;left:776px;top:425px;width:159px;height:17px;background:#fff"></div>
<div style="position:absolute;left:776px;top:442px;width:160px;height:1px;background:#c0c0c0"></div>
<div style="position:absolute;left:935px;top:425px;width:1px;height:17px;background:#c0c0c0"></div>
<div style="position:absolute;left:17px;top:443px;width:11px;height:18px;background:#800080;border-top:1px solid #fff;border-left:1px solid #fff;border-right:1px solid #000;border-bottom:1px solid #000;box-sizing:border-box"></div>
<div style="position:absolute;left:28px;top:443px;width:111px;height:17px;background:#ffffe1"></div>
<div style="position:absolute;left:28px;top:460px;width:112px;height:1px;background:#c0c0c0"></div>
<div style="position:absolute;left:139px;top:443px;width:1px;height:17px;background:#c0c0c0"></div>
<div class="t" style="left:31px;top:446px;font-size:11px;letter-spacing:0.540px;color:#000;width:109px;overflow:hidden;">GROUPBOX10</div>
<div style="position:absolute;left:140px;top:443px;width:123px;height:17px;background:#ffffe1"></div>
<div style="position:absolute;left:140px;top:460px;width:124px;height:1px;background:#c0c0c0"></div>
<div style="position:absolute;left:263px;top:443px;width:1px;height:17px;background:#c0c0c0"></div>
<div class="t" style="left:143px;top:446px;font-size:11px;letter-spacing:0.401px;color:#000;width:121px;overflow:hidden;">TGROUPBOX</div>
<div style="position:absolute;left:264px;top:443px;width:73px;height:17px;background:#ffffe1"></div>
<div style="position:absolute;left:264px;top:460px;width:74px;height:1px;background:#c0c0c0"></div>
<div style="position:absolute;left:337px;top:443px;width:1px;height:17px;background:#c0c0c0"></div>
<div class="t" style="left:267px;top:446px;font-size:11px;letter-spacing:0.544px;color:#000;width:71px;overflow:hidden;">CAPTION</div>
<div style="position:absolute;left:338px;top:443px;width:206px;height:17px;background:#f0f0f0"></div>
<div style="position:absolute;left:338px;top:460px;width:207px;height:1px;background:#c0c0c0"></div>
<div style="position:absolute;left:544px;top:443px;width:1px;height:17px;background:#c0c0c0"></div>
<div class="t" style="left:341px;top:446px;font-size:11px;letter-spacing:0.633px;color:#000;width:204px;overflow:hidden;">Notes</div>
<div style="position:absolute;left:545px;top:443px;width:230px;height:17px;background:#fff"></div>
<div style="position:absolute;left:545px;top:460px;width:231px;height:1px;background:#c0c0c0"></div>
<div style="position:absolute;left:775px;top:443px;width:1px;height:17px;background:#c0c0c0"></div>
<div class="t" style="left:548px;top:446px;font-size:11px;letter-spacing:0.633px;color:#000;width:228px;overflow:hidden;">Notes</div>
<div style="position:absolute;left:776px;top:443px;width:159px;height:17px;background:#fff"></div>
<div style="position:absolute;left:776px;top:460px;width:160px;height:1px;background:#c0c0c0"></div>
<div style="position:absolute;left:935px;top:443px;width:1px;height:17px;background:#c0c0c0"></div>
<div style="position:absolute;left:17px;top:461px;width:11px;height:18px;background:#800080;border-top:1px solid #fff;border-left:1px solid #fff;border-right:1px solid #000;border-bottom:1px solid #000;box-sizing:border-box"></div>
<div style="position:absolute;left:28px;top:461px;width:111px;height:17px;background:#ffffe1"></div>
<div style="position:absolute;left:28px;top:478px;width:112px;height:1px;background:#c0c0c0"></div>
<div style="position:absolute;left:139px;top:461px;width:1px;height:17px;background:#c0c0c0"></div>
<div class="t" style="left:31px;top:464px;font-size:11px;letter-spacing:0.479px;color:#000;width:109px;overflow:hidden;">GROUPBOX2</div>
<div style="position:absolute;left:140px;top:461px;width:123px;height:17px;background:#ffffe1"></div>
<div style="position:absolute;left:140px;top:478px;width:124px;height:1px;background:#c0c0c0"></div>
<div style="position:absolute;left:263px;top:461px;width:1px;height:17px;background:#c0c0c0"></div>
<div class="t" style="left:143px;top:464px;font-size:11px;letter-spacing:0.401px;color:#000;width:121px;overflow:hidden;">TGROUPBOX</div>
<div style="position:absolute;left:264px;top:461px;width:73px;height:17px;background:#ffffe1"></div>
<div style="position:absolute;left:264px;top:478px;width:74px;height:1px;background:#c0c0c0"></div>
<div style="position:absolute;left:337px;top:461px;width:1px;height:17px;background:#c0c0c0"></div>
<div class="t" style="left:267px;top:464px;font-size:11px;letter-spacing:0.544px;color:#000;width:71px;overflow:hidden;">CAPTION</div>
<div style="position:absolute;left:338px;top:461px;width:206px;height:17px;background:#f0f0f0"></div>
<div style="position:absolute;left:338px;top:478px;width:207px;height:1px;background:#c0c0c0"></div>
<div style="position:absolute;left:544px;top:461px;width:1px;height:17px;background:#c0c0c0"></div>
<div class="t" style="left:341px;top:464px;font-size:11px;letter-spacing:0.820px;color:#000;width:204px;overflow:hidden;">Stock Entry Details</div>
<div style="position:absolute;left:545px;top:461px;width:230px;height:17px;background:#fff"></div>
<div style="position:absolute;left:545px;top:478px;width:231px;height:1px;background:#c0c0c0"></div>
<div style="position:absolute;left:775px;top:461px;width:1px;height:17px;background:#c0c0c0"></div>
<div class="t" style="left:548px;top:464px;font-size:11px;letter-spacing:0.800px;color:#000;width:228px;overflow:hidden;">Departure Details</div>
<div style="position:absolute;left:776px;top:461px;width:159px;height:17px;background:#fff"></div>
<div style="position:absolute;left:776px;top:478px;width:160px;height:1px;background:#c0c0c0"></div>
<div style="position:absolute;left:935px;top:461px;width:1px;height:17px;background:#c0c0c0"></div>
<div style="position:absolute;left:17px;top:479px;width:11px;height:18px;background:#800080;border-top:1px solid #fff;border-left:1px solid #fff;border-right:1px solid #000;border-bottom:1px solid #000;box-sizing:border-box"></div>
<div style="position:absolute;left:28px;top:479px;width:111px;height:17px;background:#ffffe1"></div>
<div style="position:absolute;left:28px;top:496px;width:112px;height:1px;background:#c0c0c0"></div>
<div style="position:absolute;left:139px;top:479px;width:1px;height:17px;background:#c0c0c0"></div>
<div class="t" style="left:31px;top:482px;font-size:11px;letter-spacing:0.479px;color:#000;width:109px;overflow:hidden;">GROUPBOX3</div>
<div style="position:absolute;left:140px;top:479px;width:123px;height:17px;background:#ffffe1"></div>
<div style="position:absolute;left:140px;top:496px;width:124px;height:1px;background:#c0c0c0"></div>
<div style="position:absolute;left:263px;top:479px;width:1px;height:17px;background:#c0c0c0"></div>
<div class="t" style="left:143px;top:482px;font-size:11px;letter-spacing:0.401px;color:#000;width:121px;overflow:hidden;">TGROUPBOX</div>
<div style="position:absolute;left:264px;top:479px;width:73px;height:17px;background:#ffffe1"></div>
<div style="position:absolute;left:264px;top:496px;width:74px;height:1px;background:#c0c0c0"></div>
<div style="position:absolute;left:337px;top:479px;width:1px;height:17px;background:#c0c0c0"></div>
<div class="t" style="left:267px;top:482px;font-size:11px;letter-spacing:0.544px;color:#000;width:71px;overflow:hidden;">CAPTION</div>
<div style="position:absolute;left:338px;top:479px;width:206px;height:17px;background:#f0f0f0"></div>
<div style="position:absolute;left:338px;top:496px;width:207px;height:1px;background:#c0c0c0"></div>
<div style="position:absolute;left:544px;top:479px;width:1px;height:17px;background:#c0c0c0"></div>
<div class="t" style="left:341px;top:482px;font-size:11px;letter-spacing:0.407px;color:#000;width:204px;overflow:hidden;">Peso</div>
<div style="position:absolute;left:545px;top:479px;width:230px;height:17px;background:#fff"></div>
<div style="position:absolute;left:545px;top:496px;width:231px;height:1px;background:#c0c0c0"></div>
<div style="position:absolute;left:775px;top:479px;width:1px;height:17px;background:#c0c0c0"></div>
<div style="position:absolute;left:776px;top:479px;width:159px;height:17px;background:#fff"></div>
<div style="position:absolute;left:776px;top:496px;width:160px;height:1px;background:#c0c0c0"></div>
<div style="position:absolute;left:935px;top:479px;width:1px;height:17px;background:#c0c0c0"></div>
<div style="position:absolute;left:17px;top:497px;width:11px;height:18px;background:#800080;border-top:1px solid #fff;border-left:1px solid #fff;border-right:1px solid #000;border-bottom:1px solid #000;box-sizing:border-box"></div>
<div style="position:absolute;left:28px;top:497px;width:111px;height:17px;background:#ffffe1"></div>
<div style="position:absolute;left:28px;top:514px;width:112px;height:1px;background:#c0c0c0"></div>
<div style="position:absolute;left:139px;top:497px;width:1px;height:17px;background:#c0c0c0"></div>
<div class="t" style="left:31px;top:500px;font-size:11px;letter-spacing:0.479px;color:#000;width:109px;overflow:hidden;">GROUPBOX4</div>
<div style="position:absolute;left:140px;top:497px;width:123px;height:17px;background:#ffffe1"></div>
<div style="position:absolute;left:140px;top:514px;width:124px;height:1px;background:#c0c0c0"></div>
<div style="position:absolute;left:263px;top:497px;width:1px;height:17px;background:#c0c0c0"></div>
<div class="t" style="left:143px;top:500px;font-size:11px;letter-spacing:0.401px;color:#000;width:121px;overflow:hidden;">TGROUPBOX</div>
<div style="position:absolute;left:264px;top:497px;width:73px;height:17px;background:#ffffe1"></div>
<div style="position:absolute;left:264px;top:514px;width:74px;height:1px;background:#c0c0c0"></div>
<div style="position:absolute;left:337px;top:497px;width:1px;height:17px;background:#c0c0c0"></div>
<div class="t" style="left:267px;top:500px;font-size:11px;letter-spacing:0.544px;color:#000;width:71px;overflow:hidden;">CAPTION</div>
<div style="position:absolute;left:338px;top:497px;width:206px;height:17px;background:#f0f0f0"></div>
<div style="position:absolute;left:338px;top:514px;width:207px;height:1px;background:#c0c0c0"></div>
<div style="position:absolute;left:544px;top:497px;width:1px;height:17px;background:#c0c0c0"></div>
<div class="t" style="left:341px;top:500px;font-size:11px;letter-spacing:0.465px;color:#000;width:204px;overflow:hidden;">Pesos</div>
<div style="position:absolute;left:545px;top:497px;width:230px;height:17px;background:#fff"></div>
<div style="position:absolute;left:545px;top:514px;width:231px;height:1px;background:#c0c0c0"></div>
<div style="position:absolute;left:775px;top:497px;width:1px;height:17px;background:#c0c0c0"></div>
<div style="position:absolute;left:776px;top:497px;width:159px;height:17px;background:#fff"></div>
<div style="position:absolute;left:776px;top:514px;width:160px;height:1px;background:#c0c0c0"></div>
<div style="position:absolute;left:935px;top:497px;width:1px;height:17px;background:#c0c0c0"></div>
<div style="position:absolute;left:17px;top:515px;width:11px;height:18px;background:#800080;border-top:1px solid #fff;border-left:1px solid #fff;border-right:1px solid #000;border-bottom:1px solid #000;box-sizing:border-box"></div>
<div style="position:absolute;left:28px;top:515px;width:111px;height:17px;background:#ffffe1"></div>
<div style="position:absolute;left:28px;top:532px;width:112px;height:1px;background:#c0c0c0"></div>
<div style="position:absolute;left:139px;top:515px;width:1px;height:17px;background:#c0c0c0"></div>
<div class="t" style="left:31px;top:518px;font-size:11px;letter-spacing:0.479px;color:#000;width:109px;overflow:hidden;">GROUPBOX5</div>
<div style="position:absolute;left:140px;top:515px;width:123px;height:17px;background:#ffffe1"></div>
<div style="position:absolute;left:140px;top:532px;width:124px;height:1px;background:#c0c0c0"></div>
<div style="position:absolute;left:263px;top:515px;width:1px;height:17px;background:#c0c0c0"></div>
<div class="t" style="left:143px;top:518px;font-size:11px;letter-spacing:0.401px;color:#000;width:121px;overflow:hidden;">TGROUPBOX</div>
<div style="position:absolute;left:264px;top:515px;width:73px;height:17px;background:#ffffe1"></div>
<div style="position:absolute;left:264px;top:532px;width:74px;height:1px;background:#c0c0c0"></div>
<div style="position:absolute;left:337px;top:515px;width:1px;height:17px;background:#c0c0c0"></div>
<div class="t" style="left:267px;top:518px;font-size:11px;letter-spacing:0.544px;color:#000;width:71px;overflow:hidden;">CAPTION</div>
<div style="position:absolute;left:338px;top:515px;width:206px;height:17px;background:#f0f0f0"></div>
<div style="position:absolute;left:338px;top:532px;width:207px;height:1px;background:#c0c0c0"></div>
<div style="position:absolute;left:544px;top:515px;width:1px;height:17px;background:#c0c0c0"></div>
<div class="t" style="left:341px;top:518px;font-size:11px;letter-spacing:1.319px;color:#000;width:204px;overflow:hidden;">Summary</div>
<div style="position:absolute;left:545px;top:515px;width:230px;height:17px;background:#fff"></div>
<div style="position:absolute;left:545px;top:532px;width:231px;height:1px;background:#c0c0c0"></div>
<div style="position:absolute;left:775px;top:515px;width:1px;height:17px;background:#c0c0c0"></div>
<div class="t" style="left:548px;top:518px;font-size:11px;letter-spacing:1.319px;color:#000;width:228px;overflow:hidden;">Summary</div>
<div style="position:absolute;left:776px;top:515px;width:159px;height:17px;background:#fff"></div>
<div style="position:absolute;left:776px;top:532px;width:160px;height:1px;background:#c0c0c0"></div>
<div style="position:absolute;left:935px;top:515px;width:1px;height:17px;background:#c0c0c0"></div>
<div style="position:absolute;left:17px;top:533px;width:11px;height:18px;background:#800080;border-top:1px solid #fff;border-left:1px solid #fff;border-right:1px solid #000;border-bottom:1px solid #000;box-sizing:border-box"></div>
<div style="position:absolute;left:28px;top:533px;width:111px;height:17px;background:#ffffe1"></div>
<div style="position:absolute;left:28px;top:550px;width:112px;height:1px;background:#c0c0c0"></div>
<div style="position:absolute;left:139px;top:533px;width:1px;height:17px;background:#c0c0c0"></div>
<div class="t" style="left:31px;top:536px;font-size:11px;letter-spacing:0.479px;color:#000;width:109px;overflow:hidden;">GROUPBOX6</div>
<div style="position:absolute;left:140px;top:533px;width:123px;height:17px;background:#ffffe1"></div>
<div style="position:absolute;left:140px;top:550px;width:124px;height:1px;background:#c0c0c0"></div>
<div style="position:absolute;left:263px;top:533px;width:1px;height:17px;background:#c0c0c0"></div>
<div class="t" style="left:143px;top:536px;font-size:11px;letter-spacing:0.401px;color:#000;width:121px;overflow:hidden;">TGROUPBOX</div>
<div style="position:absolute;left:264px;top:533px;width:73px;height:17px;background:#ffffe1"></div>
<div style="position:absolute;left:264px;top:550px;width:74px;height:1px;background:#c0c0c0"></div>
<div style="position:absolute;left:337px;top:533px;width:1px;height:17px;background:#c0c0c0"></div>
<div class="t" style="left:267px;top:536px;font-size:11px;letter-spacing:0.544px;color:#000;width:71px;overflow:hidden;">CAPTION</div>
<div style="position:absolute;left:338px;top:533px;width:206px;height:17px;background:#f0f0f0"></div>
<div style="position:absolute;left:338px;top:550px;width:207px;height:1px;background:#c0c0c0"></div>
<div style="position:absolute;left:544px;top:533px;width:1px;height:17px;background:#c0c0c0"></div>
<div class="t" style="left:341px;top:536px;font-size:11px;letter-spacing:0.633px;color:#000;width:204px;overflow:hidden;">Notes</div>
<div style="position:absolute;left:545px;top:533px;width:230px;height:17px;background:#fff"></div>
<div style="position:absolute;left:545px;top:550px;width:231px;height:1px;background:#c0c0c0"></div>
<div style="position:absolute;left:775px;top:533px;width:1px;height:17px;background:#c0c0c0"></div>
<div class="t" style="left:548px;top:536px;font-size:11px;letter-spacing:0.633px;color:#000;width:228px;overflow:hidden;">Notes</div>
<div style="position:absolute;left:776px;top:533px;width:159px;height:17px;background:#fff"></div>
<div style="position:absolute;left:776px;top:550px;width:160px;height:1px;background:#c0c0c0"></div>
<div style="position:absolute;left:935px;top:533px;width:1px;height:17px;background:#c0c0c0"></div>
<div style="position:absolute;left:17px;top:551px;width:11px;height:18px;background:#800080;border-top:1px solid #fff;border-left:1px solid #fff;border-right:1px solid #000;border-bottom:1px solid #000;box-sizing:border-box"></div>
<div style="position:absolute;left:28px;top:551px;width:111px;height:17px;background:#ffffe1"></div>
<div style="position:absolute;left:28px;top:568px;width:112px;height:1px;background:#c0c0c0"></div>
<div style="position:absolute;left:139px;top:551px;width:1px;height:17px;background:#c0c0c0"></div>
<div class="t" style="left:31px;top:554px;font-size:11px;letter-spacing:0.479px;color:#000;width:109px;overflow:hidden;">GROUPBOX8</div>
<div style="position:absolute;left:140px;top:551px;width:123px;height:17px;background:#ffffe1"></div>
<div style="position:absolute;left:140px;top:568px;width:124px;height:1px;background:#c0c0c0"></div>
<div style="position:absolute;left:263px;top:551px;width:1px;height:17px;background:#c0c0c0"></div>
<div class="t" style="left:143px;top:554px;font-size:11px;letter-spacing:0.401px;color:#000;width:121px;overflow:hidden;">TGROUPBOX</div>
<div style="position:absolute;left:264px;top:551px;width:73px;height:17px;background:#ffffe1"></div>
<div style="position:absolute;left:264px;top:568px;width:74px;height:1px;background:#c0c0c0"></div>
<div style="position:absolute;left:337px;top:551px;width:1px;height:17px;background:#c0c0c0"></div>
<div class="t" style="left:267px;top:554px;font-size:11px;letter-spacing:0.544px;color:#000;width:71px;overflow:hidden;">CAPTION</div>
<div style="position:absolute;left:338px;top:551px;width:206px;height:17px;background:#f0f0f0"></div>
<div style="position:absolute;left:338px;top:568px;width:207px;height:1px;background:#c0c0c0"></div>
<div style="position:absolute;left:544px;top:551px;width:1px;height:17px;background:#c0c0c0"></div>
<div class="t" style="left:341px;top:554px;font-size:11px;letter-spacing:0.937px;color:#000;width:204px;overflow:hidden;">Internal Notes</div>
<div style="position:absolute;left:545px;top:551px;width:230px;height:17px;background:#fff"></div>
<div style="position:absolute;left:545px;top:568px;width:231px;height:1px;background:#c0c0c0"></div>
<div style="position:absolute;left:775px;top:551px;width:1px;height:17px;background:#c0c0c0"></div>
<div class="t" style="left:548px;top:554px;font-size:11px;letter-spacing:0.937px;color:#000;width:228px;overflow:hidden;">Internal Notes</div>
<div style="position:absolute;left:776px;top:551px;width:159px;height:17px;background:#fff"></div>
<div style="position:absolute;left:776px;top:568px;width:160px;height:1px;background:#c0c0c0"></div>
<div style="position:absolute;left:935px;top:551px;width:1px;height:17px;background:#c0c0c0"></div>
<div style="position:absolute;left:17px;top:569px;width:11px;height:18px;background:#800080;border-top:1px solid #fff;border-left:1px solid #fff;border-right:1px solid #000;border-bottom:1px solid #000;box-sizing:border-box"></div>
<div style="position:absolute;left:28px;top:569px;width:111px;height:17px;background:#ffffe1"></div>
<div style="position:absolute;left:28px;top:586px;width:112px;height:1px;background:#c0c0c0"></div>
<div style="position:absolute;left:139px;top:569px;width:1px;height:17px;background:#c0c0c0"></div>
<div class="t" style="left:31px;top:572px;font-size:11px;letter-spacing:0.479px;color:#000;width:109px;overflow:hidden;">GROUPBOX9</div>
<div style="position:absolute;left:140px;top:569px;width:123px;height:17px;background:#ffffe1"></div>
<div style="position:absolute;left:140px;top:586px;width:124px;height:1px;background:#c0c0c0"></div>
<div style="position:absolute;left:263px;top:569px;width:1px;height:17px;background:#c0c0c0"></div>
<div class="t" style="left:143px;top:572px;font-size:11px;letter-spacing:0.401px;color:#000;width:121px;overflow:hidden;">TGROUPBOX</div>
<div style="position:absolute;left:264px;top:569px;width:73px;height:17px;background:#ffffe1"></div>
<div style="position:absolute;left:264px;top:586px;width:74px;height:1px;background:#c0c0c0"></div>
<div style="position:absolute;left:337px;top:569px;width:1px;height:17px;background:#c0c0c0"></div>
<div class="t" style="left:267px;top:572px;font-size:11px;letter-spacing:0.544px;color:#000;width:71px;overflow:hidden;">CAPTION</div>
<div style="position:absolute;left:338px;top:569px;width:206px;height:17px;background:#f0f0f0"></div>
<div style="position:absolute;left:338px;top:586px;width:207px;height:1px;background:#c0c0c0"></div>
<div style="position:absolute;left:544px;top:569px;width:1px;height:17px;background:#c0c0c0"></div>
<div class="t" style="left:341px;top:572px;font-size:11px;letter-spacing:0.937px;color:#000;width:204px;overflow:hidden;">Internal Notes</div>
<div style="position:absolute;left:545px;top:569px;width:230px;height:17px;background:#fff"></div>
<div style="position:absolute;left:545px;top:586px;width:231px;height:1px;background:#c0c0c0"></div>
<div style="position:absolute;left:775px;top:569px;width:1px;height:17px;background:#c0c0c0"></div>
<div class="t" style="left:548px;top:572px;font-size:11px;letter-spacing:0.937px;color:#000;width:228px;overflow:hidden;">Internal Notes</div>
<div style="position:absolute;left:776px;top:569px;width:159px;height:17px;background:#fff"></div>
<div style="position:absolute;left:776px;top:586px;width:160px;height:1px;background:#c0c0c0"></div>
<div style="position:absolute;left:935px;top:569px;width:1px;height:17px;background:#c0c0c0"></div>
<div style="position:absolute;left:17px;top:587px;width:11px;height:18px;background:#800080;border-top:1px solid #fff;border-left:1px solid #fff;border-right:1px solid #000;border-bottom:1px solid #000;box-sizing:border-box"></div>
<div style="position:absolute;left:28px;top:587px;width:111px;height:17px;background:#ffffe1"></div>
<div style="position:absolute;left:28px;top:604px;width:112px;height:1px;background:#c0c0c0"></div>
<div style="position:absolute;left:139px;top:587px;width:1px;height:17px;background:#c0c0c0"></div>
<div class="t" style="left:31px;top:590px;font-size:11px;letter-spacing:0.314px;color:#000;width:109px;overflow:hidden;">GRUCABEXP</div>
<div style="position:absolute;left:140px;top:587px;width:123px;height:17px;background:#ffffe1"></div>
<div style="position:absolute;left:140px;top:604px;width:124px;height:1px;background:#c0c0c0"></div>
<div style="position:absolute;left:263px;top:587px;width:1px;height:17px;background:#c0c0c0"></div>
<div class="t" style="left:143px;top:590px;font-size:11px;letter-spacing:0.401px;color:#000;width:121px;overflow:hidden;">TGROUPBOX</div>
<div style="position:absolute;left:264px;top:587px;width:73px;height:17px;background:#ffffe1"></div>
<div style="position:absolute;left:264px;top:604px;width:74px;height:1px;background:#c0c0c0"></div>
<div style="position:absolute;left:337px;top:587px;width:1px;height:17px;background:#c0c0c0"></div>
<div class="t" style="left:267px;top:590px;font-size:11px;letter-spacing:0.544px;color:#000;width:71px;overflow:hidden;">CAPTION</div>
<div style="position:absolute;left:338px;top:587px;width:206px;height:17px;background:#f0f0f0"></div>
<div style="position:absolute;left:338px;top:604px;width:207px;height:1px;background:#c0c0c0"></div>
<div style="position:absolute;left:544px;top:587px;width:1px;height:17px;background:#c0c0c0"></div>
<div class="t" style="left:341px;top:590px;font-size:11px;letter-spacing:0.760px;color:#000;width:204px;overflow:hidden;">Heading</div>
<div style="position:absolute;left:545px;top:587px;width:230px;height:17px;background:#fff"></div>
<div style="position:absolute;left:545px;top:604px;width:231px;height:1px;background:#c0c0c0"></div>
<div style="position:absolute;left:775px;top:587px;width:1px;height:17px;background:#c0c0c0"></div>
<div class="t" style="left:548px;top:590px;font-size:11px;letter-spacing:0.760px;color:#000;width:228px;overflow:hidden;">Heading</div>
<div style="position:absolute;left:776px;top:587px;width:159px;height:17px;background:#fff"></div>
<div style="position:absolute;left:776px;top:604px;width:160px;height:1px;background:#c0c0c0"></div>
<div style="position:absolute;left:935px;top:587px;width:1px;height:17px;background:#c0c0c0"></div>
<div style="position:absolute;left:17px;top:605px;width:11px;height:18px;background:#800080;border-top:1px solid #fff;border-left:1px solid #fff;border-right:1px solid #000;border-bottom:1px solid #000;box-sizing:border-box"></div>
<div style="position:absolute;left:28px;top:605px;width:111px;height:17px;background:#ffffe1"></div>
<div style="position:absolute;left:28px;top:622px;width:112px;height:1px;background:#c0c0c0"></div>
<div style="position:absolute;left:139px;top:605px;width:1px;height:17px;background:#c0c0c0"></div>
<div class="t" style="left:31px;top:608px;font-size:11px;letter-spacing:0.448px;color:#000;width:109px;overflow:hidden;">GRUCABPAR</div>
<div style="position:absolute;left:140px;top:605px;width:123px;height:17px;background:#ffffe1"></div>
<div style="position:absolute;left:140px;top:622px;width:124px;height:1px;background:#c0c0c0"></div>
<div style="position:absolute;left:263px;top:605px;width:1px;height:17px;background:#c0c0c0"></div>
<div class="t" style="left:143px;top:608px;font-size:11px;letter-spacing:0.401px;color:#000;width:121px;overflow:hidden;">TGROUPBOX</div>
<div style="position:absolute;left:264px;top:605px;width:73px;height:17px;background:#ffffe1"></div>
<div style="position:absolute;left:264px;top:622px;width:74px;height:1px;background:#c0c0c0"></div>
<div style="position:absolute;left:337px;top:605px;width:1px;height:17px;background:#c0c0c0"></div>
<div class="t" style="left:267px;top:608px;font-size:11px;letter-spacing:0.544px;color:#000;width:71px;overflow:hidden;">CAPTION</div>
<div style="position:absolute;left:338px;top:605px;width:206px;height:17px;background:#f0f0f0"></div>
<div style="position:absolute;left:338px;top:622px;width:207px;height:1px;background:#c0c0c0"></div>
<div style="position:absolute;left:544px;top:605px;width:1px;height:17px;background:#c0c0c0"></div>
<div class="t" style="left:341px;top:608px;font-size:11px;letter-spacing:0.760px;color:#000;width:204px;overflow:hidden;">Heading</div>
<div style="position:absolute;left:545px;top:605px;width:230px;height:17px;background:#fff"></div>
<div style="position:absolute;left:545px;top:622px;width:231px;height:1px;background:#c0c0c0"></div>
<div style="position:absolute;left:775px;top:605px;width:1px;height:17px;background:#c0c0c0"></div>
<div class="t" style="left:548px;top:608px;font-size:11px;letter-spacing:0.760px;color:#000;width:228px;overflow:hidden;">Heading</div>
<div style="position:absolute;left:776px;top:605px;width:159px;height:17px;background:#fff"></div>
<div style="position:absolute;left:776px;top:622px;width:160px;height:1px;background:#c0c0c0"></div>
<div style="position:absolute;left:935px;top:605px;width:1px;height:17px;background:#c0c0c0"></div>
<div style="position:absolute;left:17px;top:623px;width:11px;height:18px;background:#800080;border-top:1px solid #fff;border-left:1px solid #fff;border-right:1px solid #000;border-bottom:1px solid #000;box-sizing:border-box"></div>
<div style="position:absolute;left:28px;top:623px;width:111px;height:17px;background:#ffffe1"></div>
<div style="position:absolute;left:28px;top:640px;width:112px;height:1px;background:#c0c0c0"></div>
<div style="position:absolute;left:139px;top:623px;width:1px;height:17px;background:#c0c0c0"></div>
<div class="t" style="left:31px;top:626px;font-size:11px;letter-spacing:0.285px;color:#000;width:109px;overflow:hidden;">GRUCAM</div>
<div style="position:absolute;left:140px;top:623px;width:123px;height:17px;background:#ffffe1"></div>
<div style="position:absolute;left:140px;top:640px;width:124px;height:1px;background:#c0c0c0"></div>
<div style="position:absolute;left:263px;top:623px;width:1px;height:17px;background:#c0c0c0"></div>
<div class="t" style="left:143px;top:626px;font-size:11px;letter-spacing:0.401px;color:#000;width:121px;overflow:hidden;">TGROUPBOX</div>
<div style="position:absolute;left:264px;top:623px;width:73px;height:17px;background:#ffffe1"></div>
<div style="position:absolute;left:264px;top:640px;width:74px;height:1px;background:#c0c0c0"></div>
<div style="position:absolute;left:337px;top:623px;width:1px;height:17px;background:#c0c0c0"></div>
<div class="t" style="left:267px;top:626px;font-size:11px;letter-spacing:0.544px;color:#000;width:71px;overflow:hidden;">CAPTION</div>
<div style="position:absolute;left:338px;top:623px;width:206px;height:17px;background:#f0f0f0"></div>
<div style="position:absolute;left:338px;top:640px;width:207px;height:1px;background:#c0c0c0"></div>
<div style="position:absolute;left:544px;top:623px;width:1px;height:17px;background:#c0c0c0"></div>
<div class="t" style="left:341px;top:626px;font-size:11px;letter-spacing:0.779px;color:#000;width:204px;overflow:hidden;">Chang.Ref</div>
<div style="position:absolute;left:545px;top:623px;width:230px;height:17px;background:#fff"></div>
<div style="position:absolute;left:545px;top:640px;width:231px;height:1px;background:#c0c0c0"></div>
<div style="position:absolute;left:775px;top:623px;width:1px;height:17px;background:#c0c0c0"></div>
<div class="t" style="left:548px;top:626px;font-size:11px;letter-spacing:0.779px;color:#000;width:228px;overflow:hidden;">Chang.Ref</div>
<div style="position:absolute;left:776px;top:623px;width:159px;height:17px;background:#fff"></div>
<div style="position:absolute;left:776px;top:640px;width:160px;height:1px;background:#c0c0c0"></div>
<div style="position:absolute;left:935px;top:623px;width:1px;height:17px;background:#c0c0c0"></div>
<div style="position:absolute;left:935px;top:173px;width:17px;height:481px;background:#fff;border-left:1px solid #e3e3e3;border-right:1px solid #e3e3e3;box-sizing:border-box"></div>
<div style="position:absolute;left:935px;top:173px;width:17px;height:17px;background:#fff;border:1px solid #d4d4d4;border-top:none;box-sizing:border-box"></div>
<div style="position:absolute;left:935px;top:637px;width:17px;height:17px;background:#fff;border:1px solid #d4d4d4;box-sizing:border-box"></div>
<svg style="position:absolute;left:939px;top:179px" width="9" height="7" viewBox="0 0 9 7"><path d="M1 6 L4.5 2 L8 6" fill="none" stroke="#606060" stroke-width="1.4"/></svg>
<svg style="position:absolute;left:939px;top:642px" width="9" height="7" viewBox="0 0 9 7"><path d="M1 1 L4.5 5 L8 1" fill="none" stroke="#606060" stroke-width="1.4"/></svg>
<div style="position:absolute;left:935px;top:405px;width:17px;height:17px;background:#dadada;border:1px solid #c0c0c0;box-sizing:border-box"></div>
<div style="position:absolute;left:17px;top:654px;width:918px;height:17px;background:#fff;border-top:1px solid #d4d4d4;border-bottom:1px solid #d4d4d4;box-sizing:border-box"></div>
<div style="position:absolute;left:17px;top:654px;width:17px;height:17px;background:#fff;border:1px solid #d4d4d4;border-left:none;box-sizing:border-box"></div>
<div style="position:absolute;left:918px;top:654px;width:17px;height:17px;background:#fff;border:1px solid #d4d4d4;box-sizing:border-box"></div>
<svg style="position:absolute;left:22px;top:658px" width="7" height="9" viewBox="0 0 7 9"><path d="M6 1 L2 4.5 L6 8" fill="none" stroke="#606060" stroke-width="1.4"/></svg>
<svg style="position:absolute;left:923px;top:658px" width="7" height="9" viewBox="0 0 7 9"><path d="M1 1 L5 4.5 L1 8" fill="none" stroke="#606060" stroke-width="1.4"/></svg>
<div style="position:absolute;left:34px;top:654px;width:17px;height:17px;background:#dadada;border:1px solid #c0c0c0;box-sizing:border-box"></div>
<div style="position:absolute;left:935px;top:654px;width:17px;height:17px;background:#f0f0f0"></div>
<div style="position:absolute;left:16px;top:171px;width:1px;height:500px;background:#696969"></div>
</body></html>
